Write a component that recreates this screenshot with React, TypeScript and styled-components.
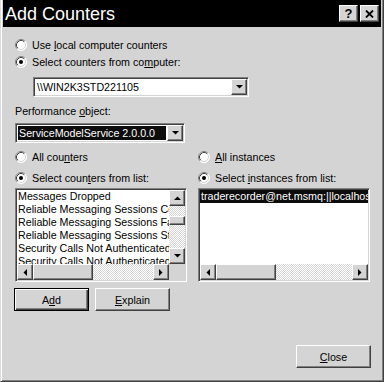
import React from "react";
import styled, { createGlobalStyle, css } from "styled-components";

const GlobalStyle = createGlobalStyle`
  html, body { margin: 0; padding: 0; background: #d4d4d4; }
  body { font-family: "Liberation Sans", Arial, sans-serif; font-size: 10.7px; color: #000; }
  * { box-sizing: border-box; }
`;

const raised = css`
  background: #d4d4d4;
  border: 1px solid;
  border-color: #fff #404040 #404040 #fff;
  box-shadow: inset -1px -1px #808080;
`;

const sunken = css`
  background: #fff;
  border: 1px solid;
  border-color: #808080 #fff #fff #808080;
  box-shadow: inset 1px 1px #404040, inset -1px -1px #d4d4d4;
  padding: 1px;
`;

const Window = styled.div`
  width: 384px;
  height: 382px;
  display: flex;
  flex-direction: column;
  background: #d4d4d4;
  border-style: solid;
  border-width: 0 1px 1px 1px;
  border-color: #404040 #404040 #404040 #dcdcdc;
  box-shadow: inset 1px 0 #fff, inset -1px -1px #808080;
  padding: 0 2px 2px 2px;
`;

const TitleBar = styled.div`
  height: 27px;
  flex: none;
  background: #000;
  color: #fff;
  display: flex;
  align-items: center;
  padding: 0 2px;
`;

const Title = styled.div`
  flex: 1;
  font-size: 18px;
  line-height: 1;
  padding-top: 1px;
  white-space: nowrap;
`;

const CaptionButtons = styled.div`
  display: flex;
  gap: 2px;
`;

const CaptionButton = styled.div`
  ${raised};
  width: 19px;
  height: 17px;
  display: flex;
  align-items: center;
  justify-content: center;
  color: #000;
  font-weight: bold;
  font-size: 13px;
  line-height: 1;
`;

const Content = styled.div`
  flex: 1;
  display: flex;
  flex-direction: column;
  padding: 9px 10px 0 12px;
`;

const RadioRow = styled.div<{ $gapTop?: number }>`
  display: flex;
  align-items: center;
  gap: 5px;
  height: 17px;
  white-space: nowrap;
  margin-top: ${(p) => p.$gapTop ?? 0}px;
`;

const Key = styled.span`
  text-decoration: underline;
  text-underline-offset: 1px;
`;

const Combo = styled.div<{ $width: number; $top: number; $left?: number }>`
  ${sunken};
  width: ${(p) => p.$width}px;
  height: 20px;
  margin-top: ${(p) => p.$top}px;
  margin-left: ${(p) => p.$left ?? 0}px;
  display: flex;
  align-items: stretch;
`;

const ComboValue = styled.div<{ $selected?: boolean }>`
  flex: 1;
  display: flex;
  align-items: center;
  white-space: nowrap;
  overflow: hidden;
  padding-left: 2px;
  ${(p) =>
    p.$selected &&
    css`
      background: #0c0c0c;
      color: #fff;
      margin: 1px;
      padding-left: 1px;
    `}
`;

const ArrowButton = styled.div`
  ${raised};
  width: 16px;
  height: 16px;
  flex: none;
  display: flex;
  align-items: center;
  justify-content: center;
`;

const Label = styled.div`
  margin-top: 8px;
  height: 13px;
  line-height: 13px;
`;

const Columns = styled.div`
  display: grid;
  grid-template-columns: 172px 172px;
  column-gap: 11px;
  margin-top: 5px;
`;

const Column = styled.div`
  display: flex;
  flex-direction: column;
`;

const ListBox = styled.div<{ $vscroll?: boolean }>`
  ${sunken};
  margin-top: 2px;
  height: 94px;
  display: grid;
  grid-template-columns: ${(p) => (p.$vscroll ? "minmax(0,1fr) 16px" : "minmax(0,1fr)")};
  grid-template-rows: minmax(0, 1fr) 16px;
`;

const Items = styled.div`
  overflow: hidden;
  display: flex;
  flex-direction: column;
`;

const Item = styled.div<{ $selected?: boolean }>`
  height: 13px;
  line-height: 13px;
  flex: none;
  white-space: nowrap;
  padding-left: 1px;
  ${(p) =>
    p.$selected &&
    css`
      background: #0c0c0c;
      color: #fff;
    `}
`;

const VScroll = styled.div`
  display: flex;
  flex-direction: column;
`;

const HScroll = styled.div`
  display: flex;
`;

const Track = styled.div<{ $size?: number }>`
  flex: ${(p) => (p.$size ? `0 0 ${p.$size}px` : "1")};
  background: repeating-conic-gradient(#d4d4d4 0% 25%, #fff 0% 50%) 0 0 / 2px 2px;
`;

const Thumb = styled.div<{ $size: number }>`
  ${raised};
  flex: 0 0 ${(p) => p.$size}px;
`;

const Corner = styled.div`
  background: #d4d4d4;
`;

const ButtonRow = styled.div`
  display: flex;
  gap: 6px;
  margin-top: 6px;
  margin-left: -1px;
`;

const PushButton = styled.button<{ $default?: boolean }>`
  width: 75px;
  height: 23px;
  padding: 0;
  font: inherit;
  color: #000;
  background: #d4d4d4;
  border: 1px solid;
  border-color: #fff #404040 #404040 #fff;
  box-shadow: inset -1px -1px #808080;
  ${(p) =>
    p.$default &&
    css`
      border-color: #000;
      box-shadow: inset 1px 1px #fff, inset -1px -1px #404040, inset -2px -2px #808080;
    `}
`;

const CloseButton = styled(PushButton)`
  align-self: flex-end;
  margin-top: 34px;
`;

type Dir = "up" | "down" | "left" | "right";

const Arrow = ({ dir }: { dir: Dir }) => {
  const paths: Record<Dir, string> = {
    up: "M0 4 L3.5 0.5 L7 4 Z",
    down: "M0 0 L7 0 L3.5 3.5 Z",
    left: "M4 0 L0.5 3.5 L4 7 Z",
    right: "M0 0 L3.5 3.5 L0 7 Z",
  };
  const vertical = dir === "up" || dir === "down";
  return (
    <svg width={vertical ? 7 : 4} height={vertical ? 4 : 7} viewBox={vertical ? "0 0 7 4" : "0 0 4 7"}>
      <path d={paths[dir]} fill="#000" />
    </svg>
  );
};

const Radio = ({ checked }: { checked?: boolean }) => (
  <svg width="12" height="12" viewBox="0 0 12 12" style={{ flex: "none" }}>
    <circle cx="6" cy="6" r="5.5" fill="#fff" />
    <path d="M2.11 9.89 A5.5 5.5 0 0 1 9.89 2.11" stroke="#808080" fill="none" />
    <path d="M9.89 2.11 A5.5 5.5 0 0 1 2.11 9.89" stroke="#fff" fill="none" />
    <path d="M2.82 9.18 A4.5 4.5 0 0 1 9.18 2.82" stroke="#404040" fill="none" />
    <path d="M9.18 2.82 A4.5 4.5 0 0 1 2.82 9.18" stroke="#d4d4d4" fill="none" />
    {checked && <circle cx="6" cy="6" r="2" fill="#000" />}
  </svg>
);

const counters = [
  "Messages Dropped",
  "Reliable Messaging Sessions Completed",
  "Reliable Messaging Sessions Faulted",
  "Reliable Messaging Sessions Started",
  "Security Calls Not Authenticated",
  "Security Calls Not Authenticated (Total)",
];

export default function App() {
  return (
    <>
      <GlobalStyle />
      <Window>
        <TitleBar>
          <Title>Add Counters</Title>
          <CaptionButtons>
            <CaptionButton>?</CaptionButton>
            <CaptionButton>
              <svg width="9" height="8" viewBox="0 0 9 8">
                <path d="M1 0.5 L8 7.5 M8 0.5 L1 7.5" stroke="#000" strokeWidth="1.8" />
              </svg>
            </CaptionButton>
          </CaptionButtons>
        </TitleBar>
        <Content>
          <RadioRow>
            <Radio />
            <span>
              Use <Key>l</Key>ocal computer counters
            </span>
          </RadioRow>
          <RadioRow>
            <Radio checked />
            <span>
              Select counters from co<Key>m</Key>puter:
            </span>
          </RadioRow>
          <Combo $width={216} $top={7} $left={18}>
            <ComboValue>{"\\\\WIN2K3STD221105"}</ComboValue>
            <ArrowButton>
              <Arrow dir="down" />
            </ArrowButton>
          </Combo>
          <Label>
            Performance <Key>o</Key>bject:
          </Label>
          <Combo $width={170} $top={5}>
            <ComboValue $selected>ServiceModelService 2.0.0.0</ComboValue>
            <ArrowButton>
              <Arrow dir="down" />
            </ArrowButton>
          </Combo>
          <Columns>
            <Column>
              <RadioRow>
                <Radio />
                <span>
                  All cou<Key>n</Key>ters
                </span>
              </RadioRow>
              <RadioRow $gapTop={4}>
                <Radio checked />
                <span>
                  Select coun<Key>t</Key>ers from list:
                </span>
              </RadioRow>
              <ListBox $vscroll>
                <Items>
                  {counters.map((c) => (
                    <Item key={c}>{c}</Item>
                  ))}
                </Items>
                <VScroll>
                  <ArrowButton>
                    <Arrow dir="up" />
                  </ArrowButton>
                  <Track $size={10} />
                  <Thumb $size={9} />
                  <Track />
                  <ArrowButton>
                    <Arrow dir="down" />
                  </ArrowButton>
                </VScroll>
                <HScroll>
                  <ArrowButton>
                    <Arrow dir="left" />
                  </ArrowButton>
                  <Thumb $size={60} />
                  <Track />
                  <ArrowButton>
                    <Arrow dir="right" />
                  </ArrowButton>
                </HScroll>
                <Corner />
              </ListBox>
            </Column>
            <Column>
              <RadioRow>
                <Radio />
                <span>
                  <Key>A</Key>ll instances
                </span>
              </RadioRow>
              <RadioRow $gapTop={4}>
                <Radio checked />
                <span>
                  Select <Key>i</Key>nstances from list:
                </span>
              </RadioRow>
              <ListBox>
                <Items>
                  <Item $selected>traderecorder@net.msmq:||localhost|private|traderecorder</Item>
                </Items>
                <HScroll>
                  <ArrowButton>
                    <Arrow dir="left" />
                  </ArrowButton>
                  <Thumb $size={60} />
                  <Track />
                  <ArrowButton>
                    <Arrow dir="right" />
                  </ArrowButton>
                </HScroll>
              </ListBox>
            </Column>
          </Columns>
          <ButtonRow>
            <PushButton $default>
              A<Key>d</Key>d
            </PushButton>
            <PushButton>
              <Key>E</Key>xplain
            </PushButton>
          </ButtonRow>
          <CloseButton>
            <Key>C</Key>lose
          </CloseButton>
        </Content>
      </Window>
    </>
  );
}
